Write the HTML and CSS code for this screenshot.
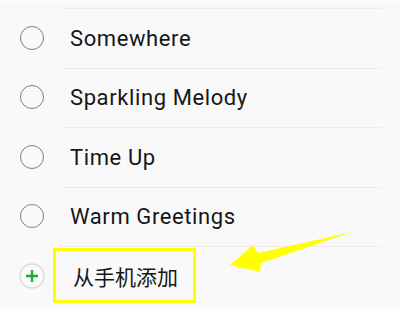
FILE: index.html
```html
<!DOCTYPE html>
<html lang="zh-CN">
<head>
    <meta charset="UTF-8">
    <meta name="viewport" content="width=device-width, initial-scale=1.0">
    <title>Ringtones</title>
    <link rel="stylesheet" href="styles.css">
</head>
<body>

    <div class="screen">
        <div class="top-rest"></div>
        <ul class="tone-list">
            <li class="tone">
                <span class="radio"></span>
                <span class="label">Somewhere</span>
            </li>
            <li class="tone">
                <span class="radio"></span>
                <span class="label">Sparkling Melody</span>
            </li>
            <li class="tone">
                <span class="radio"></span>
                <span class="label">Time Up</span>
            </li>
            <li class="tone">
                <span class="radio"></span>
                <span class="label">Warm Greetings</span>
            </li>
            <li class="tone add">
                <span class="add-icon">
                    <svg width="26" height="26" viewBox="0 0 26 26">
                        <circle cx="13" cy="13" r="12" fill="none" stroke="#dcdcdc" stroke-width="1.5"/>
                        <path d="M13 7v12M7 13h12" stroke="#22a831" stroke-width="2.4"/>
                    </svg>
                </span>
                <span class="label cjk">从手机添加</span>
                <span class="highlight"></span>
            </li>
        </ul>

        <svg class="arrow" width="400" height="309" viewBox="0 0 400 309">
            <polygon points="230,264 253,244 258,252 352,231 261,262 260,271" fill="#ffff00"/>
        </svg>
    </div>

</body>
</html>
```

FILE: styles.css
```css
* {
    margin: 0;
    padding: 0;
    box-sizing: border-box;
}
body {
    background: #f9f9f9;
    font-family: Roboto, "Noto Sans", sans-serif;
    color: #161616;
    overflow: hidden;
}
.screen {
    position: relative;
    width: 400px;
    height: 309px;
    border-top: 1px solid #fff;
}
.top-rest {
    height: 7px;
}
.tone-list {
    list-style: none;
}
.tone {
    display: flex;
    align-items: stretch;
    height: 59.5px;
}
.radio, .add-icon {
    width: 63px;
    display: flex;
    justify-content: center;
    align-items: center;
    padding-left: 1px;
}
.radio::before {
    content: "";
    width: 22px;
    height: 22px;
    border: 1.6px solid #7c7c7c;
    border-radius: 50%;
}
.label {
    flex: 1;
    margin-right: 18px;
    border-top: 1px solid #ececec;
    display: flex;
    align-items: center;
    padding-left: 7px;
    padding-bottom: 0;
    font-size: 22px;
    letter-spacing: 0.6px;
}
.cjk {
    font-family: "Noto Sans CJK SC", sans-serif;
    font-size: 21px;
    letter-spacing: 0;
    padding-left: 10px;
    padding-bottom: 4px;
}
.add {
    position: relative;
    height: 63px;
}
.add-icon {
    padding-bottom: 4px;
}
.highlight {
    position: absolute;
    left: 53px;
    top: 2px;
    width: 143px;
    height: 55px;
    border: 3px solid #ffff00;
}
.arrow {
    position: absolute;
    left: 0;
    top: 0;
}
```
